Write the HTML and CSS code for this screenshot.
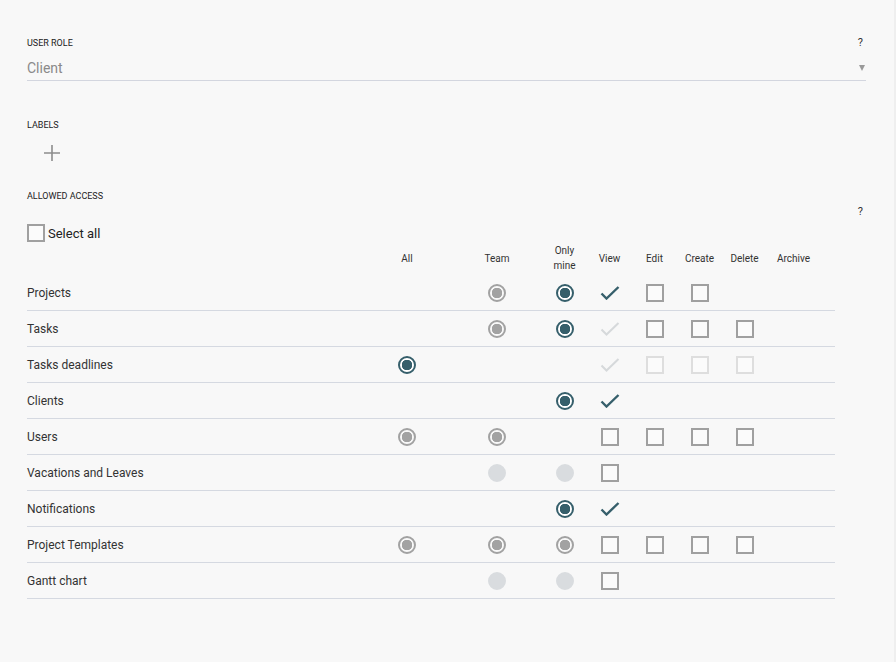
FILE: index.html
```html
<!DOCTYPE html>
<html lang="en">
<head>
  <meta charset="UTF-8">
  <title>Role permissions</title>
  <link rel="stylesheet" href="styles.css">
</head>
<body>
  <div class="page">

    <!-- User role select -->
    <div class="field">
      <div class="field-head">
        <span class="caption">User role</span>
        <span class="help">?</span>
      </div>
      <div class="select">
        <span>Client</span>
        <span class="caret"></span>
      </div>
    </div>

    <!-- Labels -->
    <div class="field labels">
      <div class="caption">Labels</div>
      <button class="add" type="button">
        <svg width="16" height="16" viewBox="0 0 16 16"><path d="M8 0v16M0 8h16" stroke="#8c8c8c" stroke-width="1.6" fill="none"/></svg>
      </button>
    </div>

    <!-- Allowed access matrix -->
    <div class="field access">
      <div class="caption">Allowed access</div>
      <div class="help-row"><span class="help">?</span></div>
      <label class="select-all"><span class="box"></span>Select all</label>

      <div class="grid head">
        <div></div>
        <div>All</div>
        <div>Team</div>
        <div>Only<br>mine</div>
        <div>View</div>
        <div>Edit</div>
        <div>Create</div>
        <div>Delete</div>
        <div>Archive</div>
      </div>

      <div class="grid row">
        <div class="name">Projects</div>
        <div></div>
        <div><span class="radio"></span></div>
        <div><span class="radio on"></span></div>
        <div><svg class="tick" viewBox="0 0 20 14"><path d="M1.5 7.5l5 5L18.5 1"/></svg></div>
        <div><span class="box"></span></div>
        <div><span class="box"></span></div>
        <div></div>
        <div></div>
      </div>

      <div class="grid row">
        <div class="name">Tasks</div>
        <div></div>
        <div><span class="radio"></span></div>
        <div><span class="radio on"></span></div>
        <div><svg class="tick off" viewBox="0 0 20 14"><path d="M1.5 7.5l5 5L18.5 1"/></svg></div>
        <div><span class="box"></span></div>
        <div><span class="box"></span></div>
        <div><span class="box"></span></div>
        <div></div>
      </div>

      <div class="grid row">
        <div class="name">Tasks deadlines</div>
        <div><span class="radio on"></span></div>
        <div></div>
        <div></div>
        <div><svg class="tick off" viewBox="0 0 20 14"><path d="M1.5 7.5l5 5L18.5 1"/></svg></div>
        <div><span class="box off"></span></div>
        <div><span class="box off"></span></div>
        <div><span class="box off"></span></div>
        <div></div>
      </div>

      <div class="grid row">
        <div class="name">Clients</div>
        <div></div>
        <div></div>
        <div><span class="radio on"></span></div>
        <div><svg class="tick" viewBox="0 0 20 14"><path d="M1.5 7.5l5 5L18.5 1"/></svg></div>
        <div></div>
        <div></div>
        <div></div>
        <div></div>
      </div>

      <div class="grid row">
        <div class="name">Users</div>
        <div><span class="radio"></span></div>
        <div><span class="radio"></span></div>
        <div></div>
        <div><span class="box"></span></div>
        <div><span class="box"></span></div>
        <div><span class="box"></span></div>
        <div><span class="box"></span></div>
        <div></div>
      </div>

      <div class="grid row">
        <div class="name">Vacations and Leaves</div>
        <div></div>
        <div><span class="radio off"></span></div>
        <div><span class="radio off"></span></div>
        <div><span class="box"></span></div>
        <div></div>
        <div></div>
        <div></div>
        <div></div>
      </div>

      <div class="grid row">
        <div class="name">Notifications</div>
        <div></div>
        <div></div>
        <div><span class="radio on"></span></div>
        <div><svg class="tick" viewBox="0 0 20 14"><path d="M1.5 7.5l5 5L18.5 1"/></svg></div>
        <div></div>
        <div></div>
        <div></div>
        <div></div>
      </div>

      <div class="grid row">
        <div class="name">Project Templates</div>
        <div><span class="radio"></span></div>
        <div><span class="radio"></span></div>
        <div><span class="radio"></span></div>
        <div><span class="box"></span></div>
        <div><span class="box"></span></div>
        <div><span class="box"></span></div>
        <div><span class="box"></span></div>
        <div></div>
      </div>

      <div class="grid row">
        <div class="name">Gantt chart</div>
        <div></div>
        <div><span class="radio off"></span></div>
        <div><span class="radio off"></span></div>
        <div><span class="box"></span></div>
        <div></div>
        <div></div>
        <div></div>
        <div></div>
      </div>
    </div>

  </div>
</body>
</html>
```

FILE: styles.css
```css
/* Base */
html, body {
  margin: 0;
  height: 100%;
}
body {
  background-color: #f8f8f8;
  font-family: Roboto, "Noto Sans", Arial, sans-serif;
  color: #333333;
  border-right: 2px solid #efefef;
  box-sizing: border-box;
}
.page {
  padding: 37px 0 0 27px;
  width: 866px;
  box-sizing: border-box;
}

/* Section captions */
.caption {
  font-size: 9px;
  line-height: 12px;
  text-transform: uppercase;
  color: #222222;
}
.help {
  font-size: 11px;
  line-height: 12px;
  color: #333333;
  padding-right: 3px;
}
.field-head {
  display: flex;
  justify-content: space-between;
}

/* Role select */
.select {
  display: flex;
  justify-content: space-between;
  align-items: center;
  height: 32px;
  padding-top: 6px;
  box-sizing: border-box;
  font-size: 14px;
  color: #8a8a8a;
  border-bottom: 1px solid #d3d6df;
}
.caret {
  width: 0;
  height: 0;
  margin-right: 1px;
  border-left: 3.5px solid transparent;
  border-right: 3.5px solid transparent;
  border-top: 6px solid #9a9a9a;
}

/* Labels */
.labels {
  margin-top: 38px;
}
.add {
  display: block;
  border: none;
  background: none;
  padding: 0;
  margin: 14px 0 0 17px;
  width: 16px;
  height: 16px;
}
.add svg {
  display: block;
}

/* Access matrix */
.access {
  margin-top: 29px;
}
.help-row {
  display: flex;
  justify-content: flex-end;
  margin-top: 4px;
}
.select-all {
  display: flex;
  align-items: center;
  gap: 3px;
  margin-top: 6px;
  font-size: 13px;
  color: #222222;
}
.grid {
  display: grid;
  grid-template-columns: 335px 90px 90px repeat(5, 45px) 53px 1fr;
  width: 808px;
  align-items: center;
}
.grid > div {
  display: flex;
  justify-content: center;
  align-items: center;
}
.grid > .name {
  justify-content: flex-start;
}
.head {
  height: 34px;
  margin-top: -1px;
  font-size: 10px;
  line-height: 15px;
  color: #333333;
  text-align: center;
}
.row {
  height: 35px;
  border-bottom: 1px solid #d5d9e1;
  font-size: 12px;
}

/* Radio buttons */
.radio {
  display: block;
  width: 18px;
  height: 18px;
  border-radius: 50%;
  box-sizing: border-box;
  border: 2px solid #a2a2a2;
  background: radial-gradient(circle, #a2a2a2 0 5px, #f8f8f8 5.5px);
}
.radio.on {
  border-color: #365f6b;
  background: radial-gradient(circle, #365f6b 0 5px, #ffffff 5.5px);
}
.radio.off {
  border-color: #d9dcdf;
  background: #d9dcdf;
}

/* Checkboxes */
.box {
  display: block;
  width: 18px;
  height: 18px;
  box-sizing: border-box;
  border: 2px solid #a0a0a0;
  background-color: #fbfbfb;
}
.box.off {
  border-color: #dedede;
}
.tick {
  width: 20px;
  height: 14px;
  fill: none;
  stroke: #365f6b;
  stroke-width: 2.4;
}
.tick.off {
  stroke: #d6d9db;
  stroke-width: 2;
}
```
